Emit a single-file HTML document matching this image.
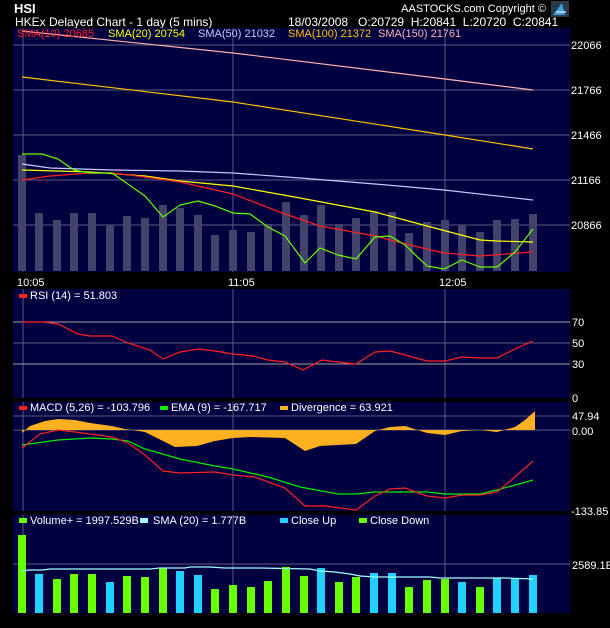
<!DOCTYPE html>
<html><head><meta charset="utf-8"><style>
html,body{margin:0;padding:0;background:#000;}
svg{display:block;font-family:"Liberation Sans",Arial,sans-serif;}
</style></head><body>
<svg width="610" height="628" viewBox="0 0 610 628" xmlns="http://www.w3.org/2000/svg">
<rect width="610" height="628" fill="#000"/>
<!-- header -->
<text x="14" y="13" fill="#fff" font-size="13" font-weight="bold">HSI</text>
<text x="15" y="26" fill="#fff" font-size="12">HKEx  Delayed Chart - 1 day (5 mins)</text>
<text x="288" y="26" fill="#fff" font-size="12" xml:space="preserve">18/03/2008   O:20729  H:20841  L:20720  C:20841</text>
<text x="546" y="12" fill="#fff" font-size="11" text-anchor="end">AASTOCKS.com Copyright ©</text>
<rect x="551" y="1" width="18" height="16" fill="#2a3a4a"/>
<path d="M553 15 L562 3 L565 15 Z" fill="#3aa0e0"/><path d="M556 12 L566 12" stroke="#cde" stroke-width="1.5"/>

<!-- main panel -->
<rect x="13" y="28" width="557" height="244" fill="#000040"/>
<g stroke="#5a5a80" stroke-width="1">
<line x1="13" y1="45" x2="570" y2="45"/><line x1="13" y1="90" x2="570" y2="90"/><line x1="13" y1="135" x2="570" y2="135"/><line x1="13" y1="180" x2="570" y2="180"/><line x1="13" y1="225" x2="570" y2="225"/>
<line x1="23" y1="28" x2="23" y2="272"/><line x1="233" y1="28" x2="233" y2="272"/><line x1="445" y1="28" x2="445" y2="272"/>
</g>
<g fill="#42426a">
<rect x="18" y="155" width="8" height="116"/><rect x="35" y="213" width="8" height="58"/><rect x="53" y="220" width="8" height="51"/><rect x="70" y="213" width="8" height="58"/><rect x="88" y="213" width="8" height="58"/><rect x="106" y="225" width="8" height="46"/><rect x="123" y="216" width="8" height="55"/><rect x="141" y="218" width="8" height="53"/><rect x="159" y="205" width="8" height="66"/><rect x="176" y="208" width="8" height="63"/><rect x="194" y="215" width="8" height="56"/><rect x="211" y="235" width="8" height="36"/><rect x="229" y="230" width="8" height="41"/><rect x="247" y="232" width="8" height="39"/><rect x="264" y="224" width="8" height="47"/><rect x="282" y="202" width="8" height="69"/><rect x="300" y="215" width="8" height="56"/><rect x="317" y="205" width="8" height="66"/><rect x="335" y="224" width="8" height="47"/><rect x="352" y="218" width="8" height="53"/><rect x="370" y="211" width="8" height="60"/><rect x="388" y="212" width="8" height="59"/><rect x="405" y="233" width="8" height="38"/><rect x="423" y="222" width="8" height="49"/><rect x="441" y="220" width="8" height="51"/><rect x="458" y="225" width="8" height="46"/><rect x="476" y="232" width="8" height="39"/><rect x="493" y="220" width="8" height="51"/><rect x="511" y="219" width="8" height="52"/><rect x="529" y="214" width="8" height="57"/>
</g>
<g fill="none" stroke-width="1.2">
<polyline stroke="#ffb0b0" points="22,31 233,53 445,79 533,90"/>
<polyline stroke="#ffc000" points="22,77 233,102 445,135 533,149"/>
<polyline stroke="#c8c8ff" points="22,164 50,168 112,170 180,171 233,173 300,178 375,184 444,190 533,200"/>
<polyline stroke="#ffff00" points="22,170 90,172 145,176 180,181 233,186 300,198 375,212 427,226 480,240 497,241 533,242"/>
<polyline stroke="#ff2020" points="22,180 50,176 90,173 112,173 145,177 180,182 233,194 285,214 320,226 375,236 410,245 444,253 480,256 533,252"/>
<polyline stroke="#66ff00" points="22,154 42,154 58,159 74,170 90,173 112,173 145,196 163,217 180,205 198,201 215,206 233,213 250,214 268,227 285,236 305,263 320,248 338,255 356,259 375,237 390,236 405,245 427,266 444,269 462,260 480,267 497,267 515,252 533,229"/>
</g>
<g font-size="11">
<text x="17" y="37" fill="#ff2020">SMA(10) 20685</text>
<text x="108" y="37" fill="#ffff00">SMA(20) 20754</text>
<text x="198" y="37" fill="#c8c8ff">SMA(50) 21032</text>
<text x="288" y="37" fill="#ffc000">SMA(100) 21372</text>
<text x="378" y="37" fill="#ffb0b0">SMA(150) 21761</text>
</g>
<g fill="#fff" font-size="11">
<text x="571" y="49">22066</text><text x="571" y="94">21766</text><text x="571" y="139">21466</text><text x="571" y="184">21166</text><text x="571" y="229">20866</text>
<text x="17" y="286">10:05</text><text x="228" y="286">11:05</text><text x="439" y="286">12:05</text>
</g>

<!-- RSI -->
<rect x="13" y="289" width="557" height="109" fill="#000040"/>
<g stroke="#5a5a80"><line x1="23" y1="289" x2="23" y2="398"/><line x1="233" y1="289" x2="233" y2="398"/><line x1="445" y1="289" x2="445" y2="398"/><line x1="13" y1="343" x2="570" y2="343"/></g>
<g stroke="#a0a0a0"><line x1="13" y1="322" x2="570" y2="322"/><line x1="13" y1="364" x2="570" y2="364"/></g>
<polyline fill="none" stroke="#ff2020" stroke-width="1.2" points="22,322 43,322 58,324 78,334 90,336 112,336 128,343 150,350 163,359 180,352 198,349 215,351 233,354 253,356 268,360 285,362 303,370 322,360 338,362 356,364 375,352 390,351 405,355 427,361 445,361 462,357 480,358 497,358 515,349 533,341"/>
<rect x="19" y="294" width="8" height="4" fill="#ff2020"/>
<g fill="#fff" font-size="11">
<text x="30" y="299">RSI (14)  = 51.803</text>
<text x="572" y="326">70</text><text x="572" y="347">50</text><text x="572" y="368">30</text><text x="572" y="402">0</text>
</g>

<!-- MACD -->
<rect x="13" y="402" width="557" height="109" fill="#000040"/>
<g stroke="#5a5a80"><line x1="23" y1="402" x2="23" y2="511"/><line x1="233" y1="402" x2="233" y2="511"/><line x1="445" y1="402" x2="445" y2="511"/><line x1="13" y1="416" x2="570" y2="416"/><line x1="13" y1="430" x2="570" y2="430"/></g>
<polygon fill="#ffb020" points="22,430 22,433 30,426 45,421 58,419 75,420 90,423 112,426 125,429 145,432 165,442 175,447 197,446 215,441 233,438 250,437 285,438 305,451 320,446 356,444 375,431 390,427 405,426 427,433 445,435 462,431 480,430 497,432 515,427 525,420 535,411 535,430"/>
<g fill="none" stroke-width="1.2">
<polyline stroke="#00ee00" points="22,445 58,440 90,438 112,439 128,441 145,449 180,459 215,466 233,469 268,477 300,487 338,494 356,494 375,492 427,492 445,494 480,494 497,490 515,485 533,480"/>
<polyline stroke="#ff2020" points="22,448 40,434 58,430 75,432 90,434 112,437 128,443 145,455 163,471 180,473 215,472 233,475 255,477 285,488 305,506 325,506 356,510 375,496 390,489 405,488 427,496 445,498 462,495 480,495 497,492 515,477 533,461"/>
</g>
<rect x="19" y="406" width="8" height="4" fill="#ff2020"/><rect x="160" y="406" width="8" height="4" fill="#00ee00"/><rect x="280" y="406" width="8" height="4" fill="#ffb020"/>
<g fill="#fff" font-size="11">
<text x="30" y="411">MACD (5,26) = -103.796</text>
<text x="171" y="411">EMA (9) = -167.717</text>
<text x="291" y="411">Divergence = 63.921</text>
<text x="572" y="420">47.94</text><text x="572" y="435">0.00</text><text x="571" y="515">-133.85</text>
</g>

<!-- Volume -->
<rect x="13" y="515" width="557" height="98" fill="#000040"/>
<g stroke="#5a5a80"><line x1="23" y1="515" x2="23" y2="613"/><line x1="233" y1="515" x2="233" y2="613"/><line x1="445" y1="515" x2="445" y2="613"/><line x1="13" y1="564" x2="570" y2="564"/></g>
<g>
<rect x="18" y="535" width="8" height="78" fill="#66ff00"/><rect x="35" y="574" width="8" height="39" fill="#20d0ff"/><rect x="53" y="579" width="8" height="34" fill="#66ff00"/><rect x="70" y="574" width="8" height="39" fill="#66ff00"/><rect x="88" y="574" width="8" height="39" fill="#66ff00"/><rect x="106" y="582" width="8" height="31" fill="#20d0ff"/><rect x="123" y="576" width="8" height="37" fill="#66ff00"/><rect x="141" y="577" width="8" height="36" fill="#66ff00"/><rect x="159" y="568" width="8" height="45" fill="#66ff00"/><rect x="176" y="571" width="8" height="42" fill="#20d0ff"/><rect x="194" y="575" width="8" height="38" fill="#20d0ff"/><rect x="211" y="589" width="8" height="24" fill="#66ff00"/><rect x="229" y="585" width="8" height="28" fill="#66ff00"/><rect x="247" y="587" width="8" height="26" fill="#66ff00"/><rect x="264" y="581" width="8" height="32" fill="#66ff00"/><rect x="282" y="567" width="8" height="46" fill="#66ff00"/><rect x="300" y="576" width="8" height="37" fill="#66ff00"/><rect x="317" y="568" width="8" height="45" fill="#20d0ff"/><rect x="335" y="582" width="8" height="31" fill="#66ff00"/><rect x="352" y="577" width="8" height="36" fill="#66ff00"/><rect x="370" y="573" width="8" height="40" fill="#20d0ff"/><rect x="388" y="573" width="8" height="40" fill="#20d0ff"/><rect x="405" y="587" width="8" height="26" fill="#66ff00"/><rect x="423" y="580" width="8" height="33" fill="#66ff00"/><rect x="441" y="579" width="8" height="34" fill="#66ff00"/><rect x="458" y="582" width="8" height="31" fill="#20d0ff"/><rect x="476" y="587" width="8" height="26" fill="#66ff00"/><rect x="493" y="578" width="8" height="35" fill="#20d0ff"/><rect x="511" y="578" width="8" height="35" fill="#20d0ff"/><rect x="529" y="575" width="8" height="38" fill="#20d0ff"/>
</g>
<polyline fill="none" stroke="#a0ffff" stroke-width="1.2" points="22,571 30,570 42,570 50,569 150,569 160,568 185,568 190,567 210,567 225,568 260,568 310,569 320,571 335,572 350,574 360,576 375,577 430,577 440,578 505,578 533,579"/>
<rect x="19" y="518" width="8" height="5" fill="#66ff00"/><rect x="140" y="518" width="8" height="5" fill="#a0ffff"/><rect x="280" y="518" width="8" height="5" fill="#20d0ff"/><rect x="359" y="518" width="8" height="5" fill="#66ff00"/>
<g fill="#fff" font-size="11">
<text x="30" y="524">Volume+  = 1997.529B</text>
<text x="153" y="524">SMA (20) = 1.777B</text>
<text x="291" y="524">Close Up</text>
<text x="370" y="524">Close Down</text>
<text x="572" y="569">2589.1E</text>
</g>
</svg>
</body></html>
